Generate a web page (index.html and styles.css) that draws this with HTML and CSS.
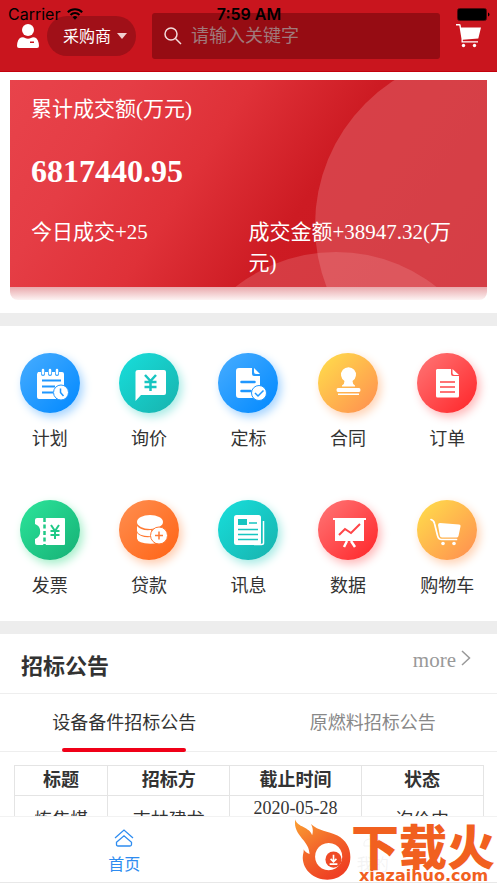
FILE: index.html
```html
<!DOCTYPE html>
<html lang="zh-CN">
<head>
<meta charset="utf-8">
<meta name="viewport" content="width=device-width, initial-scale=1">
<title>首页</title>
<link rel="stylesheet" href="styles.css">
</head>
<body>
<div class="status">
  <span class="carrier">Carrier
    <svg width="16" height="12" viewBox="0 0 16 12"><g fill="none" stroke="#000" stroke-width="2"><path d="M.8 4.3a10.2 10.2 0 0 1 14.4 0"/><path d="M3.500 7a6.300 6.300 0 0 1 9 0"/></g><path d="M5.600 9.200a3.400 3.400 0 0 1 4.800 0L8 11.700z"/></svg>
  </span>
  <span class="clock">7:59 AM</span>
  <svg class="battery" width="33" height="13" viewBox="0 0 33 13"><rect x=".5" y=".5" width="29" height="12" rx="2" fill="none" stroke="#000" stroke-opacity=".6"/><rect x="1" y="1" width="28" height="11" rx="1"/><path d="M31 4.500q1.500.5 1.500 2t-1.500 2z"/></svg>
</div>
<header class="top">
  <a class="icon-link" href="#user" aria-label="用户">
    <svg width="22" height="24" viewBox="0 0 22 24" fill="#fff"><circle cx="11" cy="6" r="6"/><path fill-rule="evenodd" d="M4 13.500q3-.6 4 .5 3 1.500 6 0 1.500-1.100 4-.5 3.500 1 4 8.500 0 2-2 2H2q-2 0-2-2 .4-7.500 4-8.500zM13 17.500v1.500h4v-1.500z"/></svg>
  </a>
  <label class="role"><select aria-label="角色"><option>采购商</option></select></label>
  <label class="search">
    <svg width="18" height="18" viewBox="0 0 18 18" fill="none" stroke="#f3dcdc" stroke-width="1.500"><circle cx="7" cy="7" r="6"/><path d="M11.500 11.500l5.500 5.500"/></svg>
    <input type="search" placeholder="请输入关键字" aria-label="搜索">
  </label>
  <a class="icon-link" href="#cart" aria-label="购物车">
    <svg width="25" height="24" viewBox="0 0 25 24" fill="#fff"><path d="M0 0h3.500q1 0 1.200 1.200L5 3.500h20l-2.700 11L6.800 15.700v1.500H22v1.300H5.500V15L3.300 1.600H0z"/><circle cx="7.500" cy="21.500" r="1.700"/><circle cx="18.500" cy="21.500" r="1.700"/></svg>
  </a>
</header>
<main class="content">
  <section class="banner">
    <div class="card">
      <svg class="card-art" viewBox="0 0 477 207" preserveAspectRatio="none" aria-hidden="true"><circle cx="477" cy="145" r="172" fill="#dd5a60" fill-opacity=".6"/><circle cx="326" cy="334" r="162" fill="#f5a0a5" fill-opacity=".25"/></svg>
      <div class="card-text">
        <p>累计成交额(万元)</p>
        <strong>6817440.95</strong>
        <div class="card-row"><p>今日成交+25</p><p>成交金额+38947.32(万元)</p></div>
      </div>
    </div>
    <div class="card-shade"></div>
  </section>
  <nav class="menu">
    <a href="#plan"><span class="disc blue"><svg viewBox="0 0 60 60"><path d="M18 19h3v2a2 2 0 0 0 4 0v-2h3v2a2 2 0 0 0 4 0v-2h3v2a2 2 0 0 0 4 0v-2h3q2 0 2 2v14H36v11H19q-2 0-2-2V21z"/><path class="line round" d="M23 17v3.500m7-3.500v3.500m7-3.500v3.500" stroke-width="2.500"/><path class="cut" d="M22 27.500h19M22 33.500h13M22 39.500h11"/><circle class="edge" cx="41" cy="39.500" r="7.500"/><path class="cut" d="M40.500 35.500v4l3 3.500" stroke-width="1.500"/></svg></span>计划</a>
    <a href="#inquiry"><span class="disc teal"><svg viewBox="0 0 60 60"><path d="M19 17h26q2 0 2 2v21q0 2-2 2H22l-5.500 6V19q0-2 2.500-2z"/><path class="cut" d="M26 22l5.500 6 5.500-6M31.500 28v10M25.500 29h12M25.500 34h12" stroke-width="2.500"/></svg></span>询价</a>
    <a href="#award"><span class="disc blue"><svg viewBox="0 0 60 60"><path d="M21 15h13v6q0 2 2 2h6v22H21q-3 0-3-3V18q0-3 3-3z"/><path d="M36 15l6 6h-4q-2 0-2-2z"/><path class="cut round" d="M23.500 29h13M23.500 38h9" stroke-width="2.500"/><circle class="edge" cx="41" cy="40" r="7.500"/><path class="cut" d="M37 40l3 3 5.500-5.500" stroke-width="1.500"/></svg></span>定标</a>
    <a href="#contract"><span class="disc amber"><svg viewBox="0 0 60 60"><path d="M26.500 28a7.500 7.500 0 1 1 8 0q0 3 2.500 4.500v1H24v-1q2.500-1.500 2.500-4.500zM20 35h21q1.500 0 1.500 2t-1.500 2H20q-1.500 0-1.500-2t1.500-2zM20 40.500h21v1.500H20z"/></svg></span>合同</a>
    <a href="#order"><span class="disc red"><svg viewBox="0 0 60 60"><path d="M20 16h14v5q0 2 2 2h6v20q0 1.500-1.500 1.500h-20q-1.500 0-1.500-1.500V17z"/><path d="M35.500 16l6.500 6h-4.500q-2 0-2-2z"/><path class="cut" d="M23 29h15M23 34h15M23 39h15" stroke-width="1.500"/></svg></span>订单</a>
    <a href="#invoice"><span class="disc green"><svg viewBox="0 0 60 60"><path d="M17 18h27q1 0 1 1v25q0 1-1 1H17q-2 0-2-2v-4a8 8 0 0 0 0-15v-4q0-2 2-2z"/><path class="cut" d="M24.500 18v27" stroke-width="2.500" stroke-dasharray="4 2.500"/><path class="cut" d="M31 25l4 6 4-6M35 31v8M30.500 31h9M30.500 35h9" stroke-width="2"/></svg></span>发票</a>
    <a href="#loan"><span class="disc orange"><svg viewBox="0 0 60 60"><path d="M18 33q4 5 14 4l4 6.500q-17 1-18-5zM18 26q4 5 14 4l3 6q-16 1-17-5z"/><ellipse cx="31" cy="22" rx="13" ry="7"/><circle class="edge" cx="40" cy="35.500" r="8.500"/><path class="cut" d="M40 31.500v8m-4-4h8" stroke-width="1.500"/></svg></span>贷款</a>
    <a href="#news"><span class="disc teal"><svg viewBox="0 0 60 60"><rect x="16" y="15" width="27" height="30" rx="2.500"/><path class="line" d="M45.500 21v22q0 1.500-2 1.500H36" stroke-width="1.500"/><path class="fill" d="M20 19h9v6h-9z"/><path class="cut" d="M31 23h8M20 29.500h20M20 34.500h20M20 39.500h20" stroke-width="1.500"/></svg></span>讯息</a>
    <a href="#data"><span class="disc red"><svg viewBox="0 0 60 60"><path d="M15 18h33v2h-2v21H17V20h-2z"/><path class="line" d="M29 41l-3 6m7-6l4 6" stroke-width="2.500"/><path class="cut" d="M21 35l6-6 6 4 9-9" stroke-width="2"/></svg></span>数据</a>
    <a href="#basket"><span class="disc amber"><svg viewBox="0 0 60 60"><path class="line round" d="M14 19.500q3 1 3.500 4l3 12q1 4 4 4h15" stroke-width="1.700"/><path d="M23 23l19 1.500q2 0 1.500 2L41.500 36q-.5 1.500-2 1.500H25q-2 0-2.200-2L21 25q0-2 2-2z"/><circle cx="26" cy="43.500" r="1.800"/><circle cx="37" cy="43.500" r="1.800"/></svg></span>购物车</a>
  </nav>
  <section class="notices">
    <div class="notice-head"><h2>招标公告</h2><a href="#more">more<svg width="10" height="16" viewBox="0 0 10 16" fill="none" stroke="#999" stroke-width="1.500"><path d="M1 1l7.500 7L1 15"/></svg></a></div>
    <div class="tabs"><button class="active" type="button">设备备件招标公告</button><button type="button">原燃料招标公告</button></div>
    <table>
      <colgroup><col class="c-title"><col class="c-party"><col class="c-time"><col class="c-state"></colgroup>
      <thead><tr><th>标题</th><th>招标方</th><th>截止时间</th><th>状态</th></tr></thead>
      <tbody><tr><td>炼焦煤</td><td>吉林建龙</td><td>2020-05-28<br>10:00</td><td>询价中</td></tr></tbody>
    </table>
  </section>
</main>
<nav class="tabbar">
  <a class="current" href="#home"><svg width="20" height="18" viewBox="0 0 20 18" fill="none" stroke="#2e8cf0" stroke-width="1.300"><path d="M1 9l9-8 9 8"/><path d="M2.500 13.300L10 6.800l7.500 6.500v2.200q0 1.500-1.500 1.500H4q-1.500 0-1.500-1.500z"/></svg>首页</a>
  <a href="#me"><svg width="20" height="18" viewBox="0 0 20 18" fill="none" stroke="#888"><circle cx="10" cy="5" r="4"/><path d="M1 17v-3q0-3 5-4h8q5 1 5 4v3z"/></svg>我的</a>
</nav>
<aside class="mark">
  <svg class="flame" width="57" height="64" viewBox="50 52 176 195" aria-hidden="true">
    <defs><linearGradient id="fire" x1="0" y1="0" x2=".6" y2="1"><stop offset="0" stop-color="#fba032"/><stop offset=".5" stop-color="#f36a2b"/><stop offset="1" stop-color="#ef4023"/></linearGradient></defs>
    <path fill="url(#fire)" fill-rule="evenodd" d="M54 55c5 24 45 22 52 49 4-14 2-25-4-35 24 22 52 21 82 36 26 14 40 38 40 66 0 42-31 70-71 70-42 0-75-30-76-67 0-13 5-20 2-27 4 6 12 13 19 15-1-19-9-30-18-42C63 99 49 82 54 55zM157 128a42 42 0 1 0 .1 0z"/>
    <circle cx="172" cy="179" r="25" fill="#ef4a27"/>
    <path fill="none" stroke="#fff" stroke-width="5" d="M172 164v21m-9-8l9 9 9-9M160 193h24"/>
  </svg>
  <div class="mark-text"><b>下载火</b><span>xiazaihuo.com</span></div>
</aside>
</body>
</html>
```
FILE: styles.css
```css
* { box-sizing: border-box; margin: 0; padding: 0; }
body {
  position: relative;
  height: 100vh;
  overflow: hidden;
  display: flex;
  flex-direction: column;
  background: #fff;
  color: #333;
  font: 18px/24px "Liberation Serif", "Noto Sans CJK SC", serif;
}
a { color: inherit; text-decoration: none; }
svg { display: block; flex: none; }

.status {
  position: absolute;
  z-index: 2;
  top: 6px;
  left: 8px;
  right: 7px;
  display: grid;
  grid-template-columns: 1fr auto 1fr;
  align-items: center;
  color: #000;
  font: 16px/16px Inter, sans-serif;
  pointer-events: none;
}
.carrier { display: flex; align-items: center; gap: 7px; }
.clock { font-weight: 600; }
.battery { justify-self: end; }

.top {
  flex: none;
  display: flex;
  align-items: center;
  padding: 13px 16px 12px 17px;
  background: #c9151e;
  border-bottom: 1px solid #c4000c;
}
.role { position: relative; margin: 0 16px 0 8px; }
.role select {
  appearance: none;
  display: block;
  width: 89px;
  height: 40px;
  padding: 0 0 2px 16px;
  border: 0;
  border-radius: 20px;
  background: #a01018;
  color: #fff;
  font: 16px "Noto Sans CJK SC", sans-serif;
}
.role::after {
  content: "";
  position: absolute;
  top: 17px;
  right: 9px;
  border: 5px solid transparent;
  border-top: 6px solid #f0cfd0;
  border-bottom: 0;
}
.search {
  flex: 1;
  min-width: 0;
  display: flex;
  align-items: center;
  gap: 9px;
  height: 46px;
  margin-right: 16px;
  padding: 0 12px;
  border-radius: 3px;
  background: #960c13;
}
.search input {
  flex: 1;
  min-width: 0;
  padding-bottom: 4px;
  border: 0;
  outline: 0;
  background: none;
  color: #fff;
  font: 18px "Noto Sans CJK SC", sans-serif;
}
.search input::placeholder { color: #a0797b; }

.content { flex: 1; min-height: 0; overflow: hidden; }
.banner { padding: 8px 10px 13px; border-bottom: 13px solid #ededed; }
.card {
  position: relative;
  overflow: hidden;
  background: linear-gradient(123deg, #e8434b 0%, #e53d45 20%, #df3138 40%, #cd1b23 61%, #c9151e 100%);
}
.card-art { position: absolute; inset: 0; width: 100%; height: 100%; }
.card-text {
  position: relative;
  padding: 14px 21px 8px;
  color: #fff;
  font-size: 21px;
  line-height: 31px;
}
.card-text strong { display: block; margin: 26px 0; font-size: 32px; line-height: 40px; }
.card-row { display: grid; grid-template-columns: 1fr 1fr; }
.card-shade {
  height: 13px;
  border-radius: 0 0 8px 8px;
  background: linear-gradient(#e9a9ac, #fdf3f3);
}

.menu {
  display: grid;
  grid-template-columns: repeat(5, 1fr);
  row-gap: 48px;
  padding: 27px 0 22px;
  border-bottom: 13px solid #ededed;
}
.menu a {
  display: flex;
  flex-direction: column;
  align-items: center;
  gap: 14px;
  line-height: 25px;
}
.disc {
  width: 60px;
  height: 60px;
  border-radius: 50%;
  background: linear-gradient(135deg, var(--from), var(--to));
  box-shadow: 3px 4px 10px var(--glow);
}
.disc svg { width: 60px; height: 60px; fill: #fff; }
.disc .cut { fill: none; stroke: var(--mid); }
.disc .cut:not([stroke-width]) { stroke-width: 2px; }
.disc .line { fill: none; stroke: #fff; }
.disc .round { stroke-linecap: round; }
.disc .edge { stroke: var(--mid); stroke-width: 1px; }
.disc .fill { fill: var(--mid); }
.blue { --from: #48adff; --mid: #1f97ff; --to: #0088ff; --glow: #a5d4ff; }
.teal { --from: #17dfdc; --mid: #17c5c1; --to: #18b2ad; --glow: #a8ebe5; }
.amber { --from: #ffe04b; --mid: #ffb34e; --to: #ff8c50; --glow: #ffd3b5; }
.red { --from: #ff7777; --mid: #ff4548; --to: #ff2428; --glow: #ffb9ba; }
.green { --from: #2ce59b; --mid: #20c987; --to: #16b075; --glow: #a5efca; }
.orange { --from: #ff8f50; --mid: #ff7a35; --to: #ff6315; --glow: #ffcdb0; }

.notice-head {
  display: flex;
  justify-content: space-between;
  padding: 10px 26px 9px 21px;
  border-bottom: 1px solid #eee;
}
.notice-head h2 { font: bold 22px/40px "Noto Sans CJK SC", sans-serif; }
.notice-head a { display: flex; gap: 5px; color: #999; font-size: 21px; line-height: 32px; }
.notice-head a svg { margin-top: 6px; }
.tabs { display: grid; grid-template-columns: 1fr 1fr; border-bottom: 1px solid #eee; }
.tabs button {
  position: relative;
  height: 57px;
  padding-bottom: 4px;
  border: 0;
  background: none;
  color: #888;
  font: 18px "Noto Sans CJK SC", sans-serif;
}
.tabs .active { color: #333; }
.tabs .active::after {
  content: "";
  position: absolute;
  left: 25%;
  right: 25%;
  bottom: -1px;
  height: 4px;
  border-radius: 2px;
  background: #f00018;
}
table {
  width: calc(100% - 27px);
  margin: 13px auto 0;
  border-collapse: collapse;
  table-layout: fixed;
  text-align: center;
}
.c-title { width: 20%; }
.c-party { width: 26%; }
.c-time { width: 28%; }
.c-state { width: 26%; }
th, td { border: 1px solid #e4e4e4; }
th { padding: 2px 0 3px; }

.tabbar {
  flex: none;
  display: grid;
  grid-template-columns: 1fr 1fr;
  height: 67px;
  border-top: 1px solid #f2f2f2;
  border-bottom: 1px solid #e8e8e8;
  background: #fff;
}
.tabbar a {
  display: flex;
  flex-direction: column;
  align-items: center;
  gap: 4px;
  padding-top: 12px;
  color: #888;
  font: 16px/24px "Noto Sans CJK SC", sans-serif;
}
.tabbar .current { color: #2e8cf0; }

.mark {
  position: absolute;
  right: 2px;
  bottom: 1px;
  display: flex;
  background: rgba(255, 255, 255, .9);
  color: #f1601f;
}
.mark-text { display: flex; flex-direction: column; width: 144px; }
.mark-text b {
  font: 900 48px/52px "Noto Sans CJK SC", sans-serif;
}
.mark-text span { padding-left: 8px; font: bold 16px/12px "DejaVu Sans", sans-serif; }
```
